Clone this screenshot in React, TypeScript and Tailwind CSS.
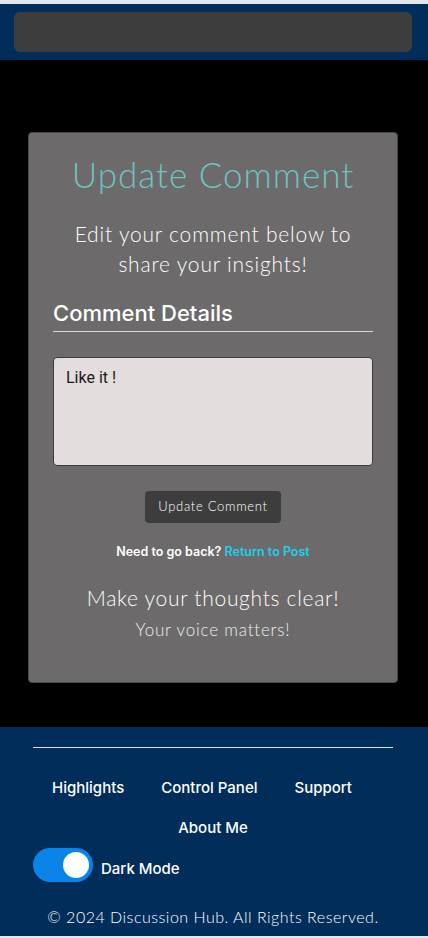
export default function App() {
  const links = ["Highlights", "Control Panel", "Support"];

  return (
    <div className="min-h-screen bg-black flex flex-col" style={{ fontFamily: "Lato, 'Noto Sans', sans-serif" }}>
      {/* top bar */}
      <div className="h-[4px] bg-[#e3e8ef]" />
      <header className="bg-[#002d5a] pl-[14px] pr-[16px] py-[8px]">
        <div className="h-[40px] rounded-md bg-[#3d3d3d]" />
      </header>

      {/* main */}
      <main className="pl-[28px] pr-[30px] pt-[72px] pb-[44px]">
        <div className="bg-[#6c6a6a] border border-[#4a4a4a] rounded-[4px] px-[24px] pt-[19px] pb-[40px] text-center">
          <h1 className="text-[35px] font-light text-[#6ec4c0] leading-[44px] tracking-[1px]">Update Comment</h1>
          <p className="mt-[23px] text-[21px] font-light text-white leading-[30px] tracking-[0.8px] px-[8px]">
            Edit your comment below to share your insights!
          </p>

          <div className="mt-[20px] text-left">
            <h2
              className="text-[22px] font-medium text-white leading-[28px] pb-[4px] border-b border-[#d8d8d8]"
              style={{ fontFamily: "Inter, 'Noto Sans', sans-serif" }}
            >
              Comment Details
            </h2>
            <textarea
              defaultValue="Like it !"
              className="mt-[25px] block w-full h-[109px] rounded-[4px] border border-[#3a3a3a] bg-[#e3dddd] px-[12px] py-[8px] text-[16px] text-[#1a1a1a] resize-none outline-none"
              style={{ fontFamily: "Roboto, 'Noto Sans', sans-serif" }}
            />
          </div>

          <button className="mt-[25px] h-[32px] px-[13px] rounded-[4px] bg-[#3d3d3d] text-white text-[13px] font-light tracking-[0.7px]">
            Update Comment
          </button>

          <p
            className="mt-[20px] text-[12.5px] font-semibold text-white"
            style={{ fontFamily: "Inter, 'Noto Sans', sans-serif" }}
          >
            Need to go back? <a href="#" className="text-[#19d3ea]">Return to Post</a>
          </p>

          <p className="mt-[22px] text-[21px] font-light text-white leading-[28px] tracking-[0.7px]">Make your thoughts clear!</p>
          <p className="mt-[6px] text-[17px] font-light text-[#eeeeee] leading-[24px] tracking-[0.8px]">Your voice matters!</p>
        </div>
      </main>

      {/* footer */}
      <footer className="bg-[#002d5a] pl-[33px] pr-[35px] pt-[20px] pb-[7px] text-white">
        <div className="border-t border-[#d8dde6]" />
        <nav
          className="mt-[28px] flex flex-wrap justify-center gap-x-[37px] gap-y-[16px] text-[15px] font-medium pl-[8px] pr-[30px]"
          style={{ fontFamily: "Inter, 'Noto Sans', sans-serif" }}
        >
          {links.map((l) => (
            <a key={l} href="#" className="leading-[24px]">{l}</a>
          ))}
          <a href="#" className="leading-[24px] ml-[22px]">About Me</a>
        </nav>
        <div className="mt-[8px] flex items-center gap-[8px]">
          <div className="relative w-[60px] h-[34px] rounded-full bg-[#0a84e8]">
            <span className="absolute right-[4px] top-[4px] w-[26px] h-[26px] rounded-full bg-white" />
          </div>
          <span className="text-[15px] font-medium mt-[8px]" style={{ fontFamily: "Inter, 'Noto Sans', sans-serif" }}>Dark Mode</span>
        </div>
        <p className="mt-[23px] text-center text-[16px] font-light leading-[24px] tracking-[0.5px]">
          © 2024 Discussion Hub. All Rights Reserved.
        </p>
      </footer>
      <div className="h-[2px] bg-[#e3e8ef]" />
    </div>
  );
}
